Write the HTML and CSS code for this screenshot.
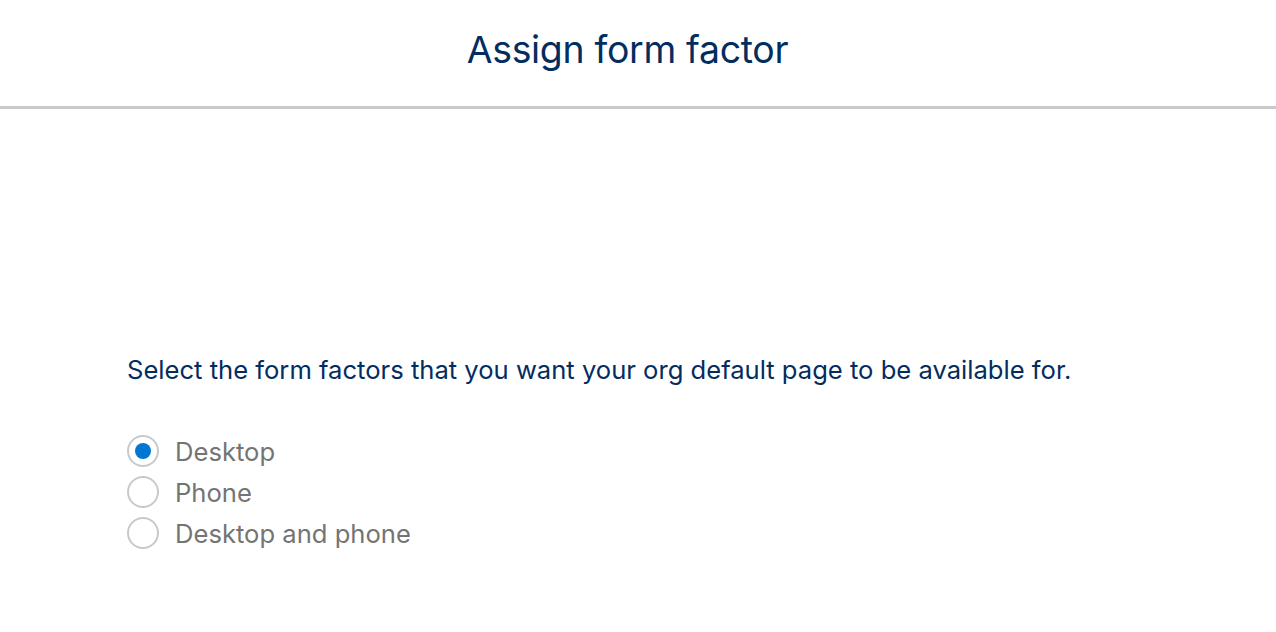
FILE: index.html
```html
<!DOCTYPE html>
<html>
<head>
    <title>Assign form factor</title>
    <link rel="stylesheet" href="styles.css">
</head>
<body>
    <div class="header">
        <h1>Assign form factor</h1>
    </div>
    <div class="content">
        <p class="intro">Select the form factors that you want your org default page to be available for.</p>
        <div class="options">
            <label class="option">
                <span class="radio checked"></span>
                <span class="label">Desktop</span>
            </label>
            <label class="option">
                <span class="radio"></span>
                <span class="label">Phone</span>
            </label>
            <label class="option">
                <span class="radio"></span>
                <span class="label">Desktop and phone</span>
            </label>
        </div>
    </div>
</body>
</html>
```

FILE: styles.css
```css
body {
    margin: 0;
    font-family: Inter, "Noto Sans", Arial, sans-serif;
    background-color: #fff;
}
.header {
    height: 106px;
    border-bottom: 3px solid #c9c9c9;
    display: flex;
    align-items: center;
    justify-content: center;
    padding-right: 21px;
}
.header h1 {
    margin: 0 0 8px 0;
    font-size: 37.4px;
    font-weight: 400;
    color: #032d60;
    letter-spacing: -0.3px;
}
.content {
    padding: 244px 0 0 127px;
}
.intro {
    margin: 0 0 48px 0;
    font-size: 25.6px;
    color: #032d60;
    line-height: 34px;
}
.options {
    display: flex;
    flex-direction: column;
    gap: 9px;
}
.option {
    display: flex;
    align-items: center;
    gap: 16px;
    height: 32px;
}
.radio {
    width: 28px;
    height: 28px;
    border: 2px solid #c9c9c9;
    border-radius: 50%;
    display: flex;
    align-items: center;
    justify-content: center;
}
.radio.checked::after {
    content: "";
    width: 16px;
    height: 16px;
    border-radius: 50%;
    background-color: #0176d3;
}
.label {
    font-size: 25.6px;
    color: #747474;
}
```
